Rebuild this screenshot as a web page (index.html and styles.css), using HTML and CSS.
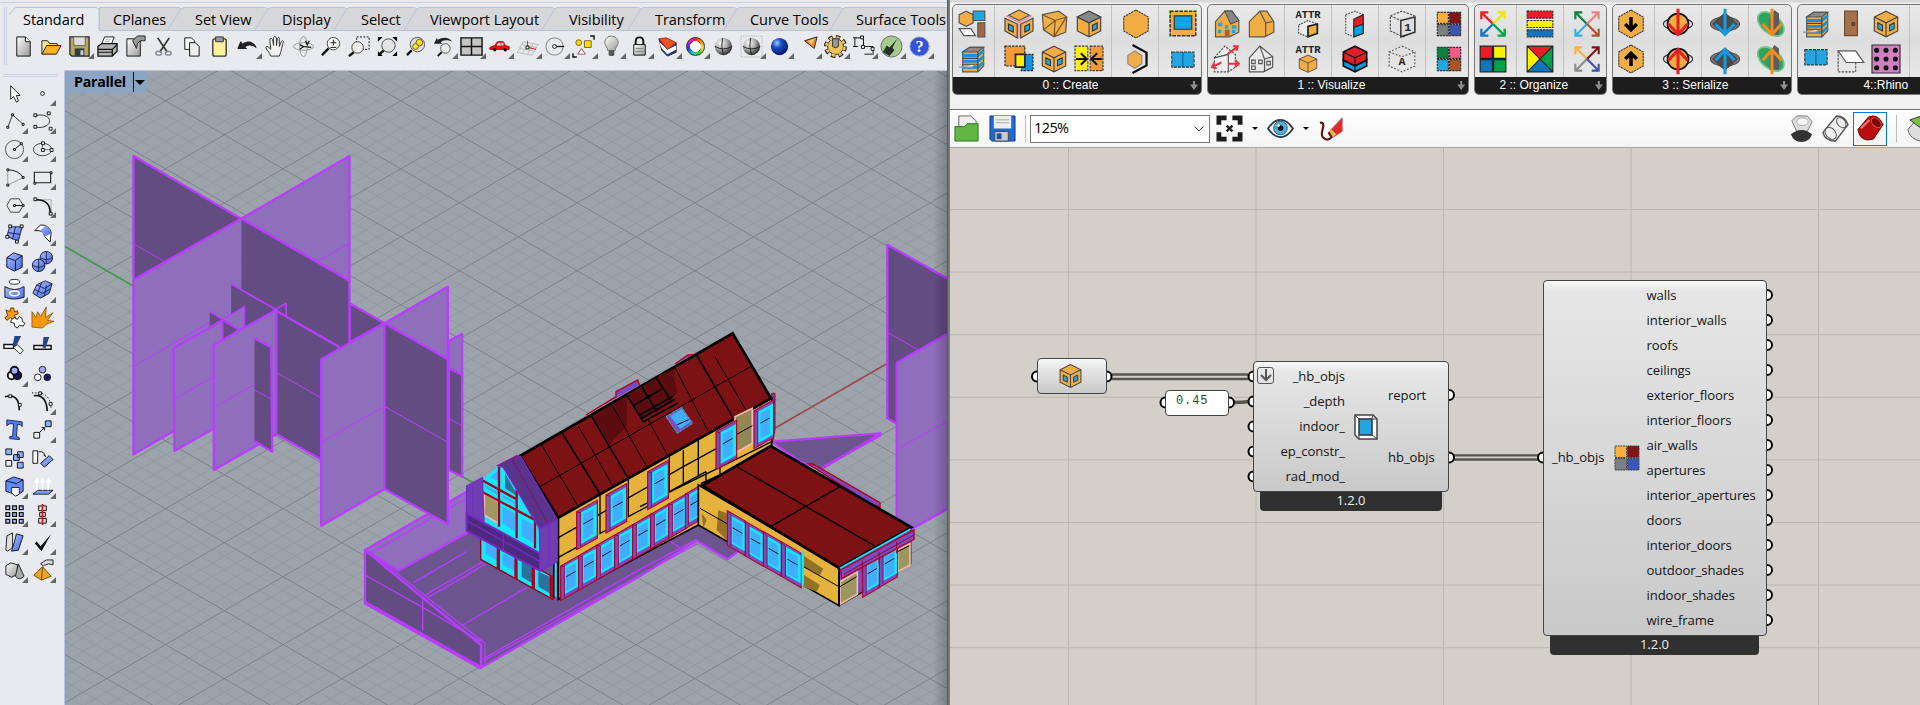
FILE: index.html
```html
<!DOCTYPE html>
<html lang="en">
<head>
<meta charset="utf-8">
<title>Rhino and Grasshopper</title>
<link rel="stylesheet" href="styles.css">
</head>
<body>
<svg class="defs" width="0" height="0">
<defs>
<linearGradient id="gold" x1="0" y1="0" x2="0" y2="1"><stop offset="0" stop-color="#fff3a8"/><stop offset="1" stop-color="#f0b020"/></linearGradient>
<linearGradient id="blu" x1="0" y1="0" x2="1" y2="1"><stop offset="0" stop-color="#a9bfff"/><stop offset="1" stop-color="#4468dd"/></linearGradient>
<linearGradient id="gry" x1="0" y1="0" x2="1" y2="1"><stop offset="0" stop-color="#fff"/><stop offset="1" stop-color="#999"/></linearGradient>
<radialGradient id="ball" cx=".35" cy=".3" r=".75"><stop offset="0" stop-color="#fff"/><stop offset=".5" stop-color="#aaa"/><stop offset="1" stop-color="#222"/></radialGradient>
<radialGradient id="bball" cx=".35" cy=".3" r=".75"><stop offset="0" stop-color="#9fd0ff"/><stop offset=".35" stop-color="#1c50c8"/><stop offset="1" stop-color="#001060"/></radialGradient>
<g id="cube"><path d="M12 1l10 5v12l-10 5-10-5V6z" fill="#f3ad45" stroke="#444"/><path d="M2 6l10 5 10-5M12 11v12" fill="none" stroke="#444"/></g>
<g id="cubewin"><use href="#cube"/><path d="M5 11l4 2v5l-4-2zM19 11l-4 2v5l4-2z" fill="#25a5e0" stroke="#333" stroke-width=".9"/></g>
<g id="hex"><path d="M12 0l10.500 6v12L12 24 1.500 18V6z" fill="#f3ad45" stroke="#444" stroke-dasharray="2 .6"/></g>
<g id="building"><path d="M4 6l6-4h12v16l-5 5H4z" fill="#f3ad45" stroke="#555"/><path d="M4 6h13l5-4H10z" fill="#8a8a8a" stroke="#555"/><path d="M4 9h13l5-4M4 14h13l5-4M4 19h13l5-4" fill="none" stroke="#1991d2" stroke-width="2.500"/><path d="M4 11.500h13M4 16.500h13M17 6v17" stroke="#444" fill="none"/><path d="M1 19h11l3-2" fill="#fff" stroke="#888"/></g>
<g id="eyes"><ellipse cx="12" cy="12" rx="12.500" ry="6" fill="#777" stroke="#555"/><path d="M1 12L12 2l11 10-11 10z" fill="#4d4d4d"/><circle cx="12" cy="12" r="8"/></g>
<g id="dn"><path d="M12-1v22M4 12l8 9 8-9" fill="none" stroke-width="2.600"/></g>
<g id="up"><path d="M12 25V4M4 13l8-9 8 9" fill="none" stroke-width="2.600"/></g>
<g id="leaf"><ellipse cx="11" cy="12" rx="13" ry="8" transform="rotate(40 11 12)" fill="#2fa45c" stroke="#72c690" stroke-width="1.500"/><path d="M10 21V7l4-7 4 3v18z" fill="#5c5c5c"/></g>
<g id="bluewin"><path d="M1 6h22v13H1z" fill="#25a5e0" stroke="#333" stroke-dasharray="3 1"/><path d="M12 6v13" stroke="#135c86"/></g>
<g id="win"><path d="M0 0h62v114H0z" fill="#7b4abf" stroke="#b00020" stroke-width="3.500"/><path d="M13 10h47v94H13z" fill="#13e8ff"/><path d="M20 19h30v76H20z" fill="#40adff"/><path d="M20 48h30" stroke="#000" stroke-width="2.500"/><path d="M0 0l12 10v104" fill="none" stroke="#a00030" stroke-width="2.500"/></g>
<g id="lowin"><path d="M0 0h54v104H0z" fill="#7b4abf" stroke="#b00020" stroke-width="3.500"/><path d="M12 8h41v84H12z" fill="#13e8ff"/><path d="M16 17h29v68H16z" fill="#40adff"/><path d="M16 42h29" stroke="#000" stroke-width="2.500"/><path d="M0 0l11 8v92" fill="none" stroke="#a00030" stroke-width="2.500"/></g>
</defs>
</svg>

<main class="screen">
<section class="rhino">
  <header class="tabs">
    <svg class="tabshape" width="948" height="36" viewBox="0 0 948 36">
      <path d="M0 2.500h948M4.500 7v58M6.500 7v58" stroke="#c9d0e6" fill="none"/>
      <g fill="#d7d7d9" stroke="#b8c3dd"><path d="M99.500 30.500V7.500H178q3 0 3 3v20z"/>
      <path d="M167.500 30.500l13-21q1.500-2 4-2H265q3 0 3 3v20z"/><path d="M254.500 30.500l13-21q1.500-2 4-2H344q3 0 3 3v20z"/>
      <path d="M333.500 30.500l13-21q1.500-2 4-2H414q3 0 3 3v20z"/><path d="M403.500 30.500l13-21q1.500-2 4-2H552q3 0 3 3v20z"/>
      <path d="M541.500 30.500l13-21q1.500-2 4-2H638q3 0 3 3v20z"/><path d="M627.500 30.500l13-21q1.500-2 4-2H734q3 0 3 3v20z"/>
      <path d="M723.500 30.500l13-21q1.500-2 4-2H840q3 0 3 3v20z"/><path d="M829.500 30.500l13-21q1.500-2 4-2H952v23z"/></g>
      <path d="M9 15l5-6q1-1.500 3-1.500h79q3 0 3 3v20" fill="none" stroke="#b8c3dd"/>
    </svg>
    <span style="width:90px">Standard</span><span style="width:82px">CPlanes</span><span style="width:87px">Set View</span><span style="width:79px">Display</span><span style="width:69px">Select</span><span style="width:139px">Viewport Layout</span><span style="width:86px">Visibility</span><span style="width:95px">Transform</span><span style="width:106px">Curve Tools</span><span style="width:92px">Surface Tools</span>
  </header>
  <div class="toolbar">
    <i><svg viewBox="0 0 24 24"><path d="M5 2h9l5 5v15H5z" fill="url(#gry)" stroke="#111"/><path d="M14 2v5h5" fill="#fff" stroke="#111"/></svg></i>
    <i><svg viewBox="0 0 24 24"><path d="M2 20V6h6l2 3h8v3" fill="#ffe98c" stroke="#222"/><path d="M2 20l5-9h15l-5 9z" fill="#f7b320" stroke="#222"/></svg></i>
    <i class="m"><svg viewBox="0 0 24 24"><path d="M2 2h20v20H4l-2-2z" fill="#b3a85c" stroke="#222" stroke-width="1.300"/><path d="M6 2h12v9H6z" fill="#ddd" stroke="#666"/><path d="M7 14h10v8H7z" fill="#303a48"/><path d="M13 16h3v5h-3z" fill="#c8cbd8"/></svg></i>
    <i><svg viewBox="0 0 24 24"><path d="M6 9l3-7h10l-3 8z" fill="#fff" stroke="#222"/><path d="M2 12l4-3h16v8l-5 5H2z" fill="#b4b4b4" stroke="#111" stroke-width="1.300"/><path d="M2 15h15l5-5M2 18h15M17 15v7" stroke="#111" fill="none" stroke-width="1.300"/><path d="M10 5h5M9 7h5" stroke="#aaa"/></svg></i>
    <i><svg viewBox="0 0 24 24"><path d="M3 4h14v18H3z" fill="url(#gry)" stroke="#111"/><path d="M9 6l5-5h8v5h-5l-3 3-1 5z" fill="#999" stroke="#222"/></svg></i>
    <i><svg viewBox="0 0 24 24"><path d="M6 3l10 15M18 3L8 18" stroke="#333" stroke-width="1.800"/><ellipse cx="7" cy="19" rx="3" ry="2" fill="none" stroke="#889" stroke-width="1.500"/><ellipse cx="17" cy="19" rx="3" ry="2" fill="none" stroke="#889" stroke-width="1.500"/></svg></i>
    <i><svg viewBox="0 0 24 24"><path d="M5 3h7l3 3v9H5z" fill="#fff" stroke="#111"/><path d="M10 8h6l4 4v10H10z" fill="#eee" stroke="#111"/></svg></i>
    <i><svg viewBox="0 0 24 24"><rect x="5" y="4" width="14" height="18" rx="2" fill="#fff09b" stroke="#333" stroke-width="1.400"/><path d="M8 2h8v5H8z" fill="#999" stroke="#333"/></svg></i>
    <i class="m"><svg viewBox="0 0 24 24"><path d="M2 14l3-7 1 3c5-4 12-4 15 3-5-4-10-3-12 0l2 1z" fill="#222" stroke="#111"/></svg></i>
    <i><svg viewBox="0 0 24 24"><path d="M7 22c-1-4-5-7-5-9s3-1 5 2L6 5c0-2 2-2 3 0l1 6V3c0-2 2-2 3 0v8l1-7c0-2 3-2 2 1v7l2-5c1-2 3-1 2 1-2 7-2 9-4 14z" fill="#f2f2f2" stroke="#333"/></svg></i>
    <i><svg viewBox="0 0 24 24"><ellipse cx="12" cy="12" rx="10.500" ry="4" fill="none" stroke="#999"/><ellipse cx="12" cy="12" rx="4" ry="10.500" fill="none" stroke="#999"/><path d="M8 10l4 2-4 3M14 6l2 4 2-4M12 12l8 1" stroke="#111" fill="none" stroke-width="1.300"/></svg></i>
    <i><svg viewBox="0 0 24 24"><circle cx="14" cy="9" r="6.500" fill="#f4f4f4" stroke="#444"/><path d="M9 14l-7 7" stroke="#111" stroke-width="2.500"/><path d="M14 5v6M11 8h6M11 13h6" stroke="#222"/></svg></i>
    <i><svg viewBox="0 0 24 24"><path d="M9 2h13v13H9z" fill="none" stroke="#111" stroke-dasharray="2 1.500"/><circle cx="10" cy="13" r="6" fill="#eee" stroke="#444"/><path d="M6 18l-5 4" stroke="#111" stroke-width="2.500"/></svg></i>
    <i><svg viewBox="0 0 24 24"><circle cx="13" cy="11" r="7" fill="#e4e4e4" stroke="#444"/><path d="M8 16l-4 4" stroke="#111" stroke-width="2.500"/><path d="M2 2h5L2 7zM22 2v5l-5-5zM22 22h-5l5-5zM2 22v-5l5 5z"/></svg></i>
    <i><svg viewBox="0 0 24 24"><circle cx="14" cy="10" r="7.500" fill="#ddd" stroke="#555"/><path d="M8 16l-5 5" stroke="#111" stroke-width="2.500"/><circle cx="16" cy="8" r="3.500" fill="#ffe42e" stroke="#775500"/><circle cx="12" cy="12" r="3" fill="#ffe42e" stroke="#775500"/></svg></i>
    <i class="m"><svg viewBox="0 0 24 24"><path d="M2 9l3-6 1 2c5-3 12-3 15 2-5-2-10-2-12 1l2 1z" fill="#222"/><circle cx="14" cy="14" r="5" fill="#eee" stroke="#555"/><path d="M10 18l-4 4" stroke="#111" stroke-width="2"/></svg></i>
    <i class="m"><svg viewBox="0 0 24 24"><path d="M1 3h22v18H1z" fill="#c4c4c4" stroke="#111" stroke-width="1.500"/><path d="M12 3v18M1 12h22" stroke="#111" stroke-width="1.500"/></svg></i>
    <i class="m"><svg viewBox="0 0 24 24"><path d="M2 13l5-2 3-4h6l2 4 4 1v3H2z" fill="#e11313" stroke="#b00"/><path d="M11 8h2v3H9zM14 8h2v3h-2z" fill="#fff"/><circle cx="7" cy="15.500" r="1.700"/><circle cx="18" cy="15.500" r="1.700"/></svg></i>
    <i class="m"><svg viewBox="0 0 24 24"><path d="M1 18L8 7l15 3-6 11zM4 14l15 3M6 10l15 3M13 8L7 19M18 9l-6 11" fill="none" stroke="#bbb"/><path d="M12 12V6" stroke="#1a9a30"/><path d="M13 13l8 2" stroke="#d01010"/><path d="M10.500 11.500h3v3h-3z" fill="#fff" stroke="#111"/></svg></i>
    <i class="m"><svg viewBox="0 0 24 24"><circle cx="11" cy="12" r="9" fill="none" stroke="#999" stroke-width="1.300"/><path d="M11 12h10" stroke="#111" stroke-width="1.300"/><circle cx="11" cy="12" r="2" fill="#fff" stroke="#111"/></svg></i>
    <i class="m"><svg viewBox="0 0 24 24"><path d="M19 1h4v4M1 19v4h4" fill="none" stroke="#111" stroke-width="1.500"/><circle cx="7" cy="8" r="3" fill="#ffdc18" stroke="#885f00"/><path d="M13 6h7v7h-7z" fill="#ffe018" stroke="#885f00"/><path d="M10 14l4 6H6z" fill="#fff" stroke="#955"/></svg></i>
    <i class="m"><svg viewBox="0 0 24 24"><path d="M8 16c0-4-3-5-3-8 0-9 14-9 14 0 0 3-3 4-3 8z" fill="url(#gry)" stroke="#777"/><path d="M9 16h6v5l-2 1h-2l-2-1z" fill="#555"/></svg></i>
    <i class="m"><svg viewBox="0 0 24 24"><path d="M8 11V7c0-6 8-6 8 0v4" fill="none" stroke="#111" stroke-width="2"/><path d="M6 10h12v11H6z" fill="url(#gry)" stroke="#111"/><path d="M8 14h8M8 17h8" stroke="#777"/></svg></i>
    <i class="m"><svg viewBox="0 0 24 24"><path d="M3 4l9 8 9-4v10l-9 4-6-6z" fill="#1c3aa0" stroke="#222"/><path d="M3 7l9 8 9-4v4l-9 5-6-6z" fill="#fff"/><path d="M3 4l8-1 10 5-9 7z" fill="#f0531c" stroke="#a21"/></svg></i>
    <i class="m"><b class="wheel"></b></i>
    <i><svg viewBox="0 0 24 24"><circle cx="12" cy="12" r="9" fill="url(#ball)"/><path d="M3 12q9 5 18 0M11 3q-2 9 1 18" fill="none" stroke="#222"/></svg></i>
    <i class="m"><svg viewBox="0 0 24 24"><path d="M1 1h22v22H1z" fill="none" stroke="#ccc" stroke-width="2" stroke-dasharray="1 1"/><circle cx="12" cy="12" r="9" fill="url(#ball)"/><path d="M3 12q9 5 18 0M11 3q-2 9 1 18" fill="none" stroke="#222"/></svg></i>
    <i class="m"><svg viewBox="0 0 24 24"><circle cx="12" cy="12" r="9" fill="url(#bball)"/></svg></i>
    <i class="m"><svg viewBox="0 0 24 24"><path d="M9 6l13-4-3 12z" fill="#f7921e" stroke="#222"/><path d="M13 6l6-2-3 6z" fill="#ffd18a"/></svg></i>
    <i class="m"><svg viewBox="0 0 24 24"><circle cx="12" cy="12" r="9.500" fill="none" stroke="#222" stroke-width="5" stroke-dasharray="4.400 3.060"/><circle cx="12" cy="12" r="8.300" fill="#efc35c" stroke="#222"/><circle cx="12" cy="12" r="9.300" fill="none" stroke="#efc35c" stroke-width="3" stroke-dasharray="3 4.300" stroke-dashoffset="-.7"/><path d="M9 4h6v8q-3 3-6 0z" fill="#999" stroke="#333"/></svg></i>
    <i class="m"><svg viewBox="0 0 24 24"><path d="M4 3h6M1 3h4M1 12h5M3 3v9M12 4v8h10v9M13 20h8" stroke="#111" fill="none"/><path d="M9 1h3v3H9zM10 11h3v3h-3zM20 13h3v3h-3z" fill="#fff" stroke="#111"/></svg></i>
    <i class="m"><svg viewBox="0 0 24 24"><circle cx="12" cy="12" r="11" fill="#a8cc8d" stroke="#667"/><path d="M3 18l4-7 3 2 8-9-5 9 2 3-5 6z" fill="#263222"/></svg></i>
    <i class="m"><svg viewBox="0 0 24 24"><circle cx="12" cy="12" r="10" fill="#3554d5" stroke="#8a9be8"/><text x="12" y="18" text-anchor="middle" class="q">?</text></svg></i>
  </div>
  <div class="work">
    <aside class="side">
      <i><svg viewBox="0 0 24 24"><path d="M8 4v14l3-3 3 6 2-1-2-6h4z" fill="#fff" stroke="#222"/></svg></i>
      <i class="m"><svg viewBox="0 0 24 24"><circle cx="12" cy="12" r="2" fill="#fff" stroke="#222"/></svg></i>
      <i class="m"><svg viewBox="0 0 24 24"><path d="M5 18l5-13 11 10" fill="none" stroke="#333"/><path d="M4 17h2v2H4zM9 4h2v2H9zM20 14h2v2h-2z" fill="#fff" stroke="#111"/></svg></i>
      <i class="m"><svg viewBox="0 0 24 24"><path d="M4 6c20-5 21 15 0 12" fill="none" stroke="#333"/><path d="M3 4h3v3H3zM17 2h3v3h-3zM3 16h3v3H3zM19 18h3v3h-3z" fill="#fff" stroke="#111"/></svg></i>
      <i class="m"><svg viewBox="0 0 24 24"><circle cx="12" cy="12" r="9.500" fill="none" stroke="#555"/><path d="M12 12l7-6" stroke="#111"/><path d="M11 11h2v2h-2zM18 5h2v2h-2z" fill="#fff" stroke="#111"/></svg></i>
      <i class="m"><svg viewBox="0 0 24 24"><ellipse cx="12" cy="12" rx="9.500" ry="6.500" fill="none" stroke="#444"/><path d="M12 12V6M12 12h9" stroke="#777"/><path d="M11 4h3v3h-3zM11 11h3v3h-3zM20 11h3v3h-3z" fill="#fff" stroke="#111"/></svg></i>
      <i class="m"><svg viewBox="0 0 24 24"><path d="M5 4q11 0 16 8" fill="none" stroke="#111"/><path d="M5 4v16l16-8" fill="none" stroke="#999"/><path d="M4 3h2v2H4zM4 19h2v2H4zM20 11h2v2h-2z" fill="#fff" stroke="#111"/></svg></i>
      <i class="m"><svg viewBox="0 0 24 24"><path d="M3.500 6.500h17v11h-17z" fill="none" stroke="#222" stroke-width="1.200"/><path d="M20 6h2v2h-2zM3 17h2v2H3z" fill="#fff" stroke="#111"/></svg></i>
      <i class="m"><svg viewBox="0 0 24 24"><path d="M8 5h9l4 7-4 7H8l-4-7z" fill="none" stroke="#444"/><path d="M12 12h9" stroke="#111"/><path d="M11 11h2v2h-2zM20 11h2v2h-2z" fill="#fff" stroke="#111"/></svg></i>
      <i class="m"><svg viewBox="0 0 24 24"><path d="M4 6h17v14" fill="none" stroke="#aaa"/><path d="M4 6q16-1 16 14" fill="none" stroke="#111" stroke-width="1.700"/><path d="M3 4h3v3H3zM19 19h3v3h-3z" fill="#fff" stroke="#111"/></svg></i>
      <i class="m"><svg viewBox="0 0 24 24"><path d="M7 5h13l-4 15-12-5z" fill="url(#blu)" stroke="#225"/><path d="M5 11l13 2M13 5l-3 13" stroke="#225"/><path d="M6 3h3v3H6zM18 3h3v3h-3zM3 14h3v3H3zM13 19h3v3h-3z" fill="#fff" stroke="#111"/></svg></i>
      <i class="m"><svg viewBox="0 0 24 24"><path d="M4 9l6-6q9 0 11 8l-1 10-6-6q0-7-10-6z" fill="#fff" stroke="#111"/><path d="M9 9l6-5q6 3 6 8l-7 3q-1-5-5-6z" fill="url(#blu)"/></svg></i>
      <i class="m"><svg viewBox="0 0 24 24"><path d="M4 8l7-5 9 3v12l-8 4-8-4z" fill="url(#blu)" stroke="#113"/><path d="M4 8l9 3 7-5M13 11v10" fill="none" stroke="#113"/></svg></i>
      <i class="m"><svg viewBox="0 0 24 24"><circle cx="16" cy="8" r="6.500" fill="url(#blu)" stroke="#113"/><circle cx="8" cy="16" r="6.500" fill="url(#blu)" stroke="#113"/><path d="M10 8q6 4 12 0M16 2v12M2 16q6 4 12 0M8 10v12" stroke="#225" fill="none"/></svg></i>
      <i class="m"><svg viewBox="0 0 24 24"><ellipse cx="12" cy="4" rx="5.500" ry="2.500" fill="#fff" stroke="#222"/><path d="M2 9q10 6 20 0v11q-10 4-20 0z" fill="url(#blu)" stroke="#113"/><ellipse cx="12" cy="16" rx="5" ry="2.500" fill="none" stroke="#fff" stroke-width="1.500"/></svg></i>
      <i class="m"><svg viewBox="0 0 24 24"><path d="M2 16l4-9 9-4 7 3-3 10-9 5z" fill="url(#blu)" stroke="#225"/><path d="M4 12l8 4 9-5M6 7l8 4 8-5M11 5l-5 13M16 8l-2 11" stroke="#225" fill="none"/></svg></i>
      <i><svg viewBox="0 0 24 24"><path d="M3 4l4 2 1-4h3l1 4 3-1 1 3-4 2 2 4-3 1-3-3-4 3-2-3 3-2z" fill="#f69a12" stroke="#6b3a00"/><path d="M12 12l3 2 2-3 3 2v3l3 2-2 3-4-1-2 3-3-2v-3l-4-1 1-3z" fill="#fff" stroke="#222"/></svg></i>
      <i><svg viewBox="0 0 24 24"><path d="M1 22V6l4 6 2-6 3 5 6-10-1 11 8-5-6 8 7 1-8 3-4 4z" fill="#f5980c" stroke="#8a4c00" stroke-width=".8"/></svg></i>
      <i><svg viewBox="0 0 24 24"><path d="M1 11h10v4H1z" fill="#fff" stroke="#111" stroke-width="1.500"/><path d="M12 2h7l-6 12-3-2z" fill="#24458f"/><path d="M11 14l4-3 6 6-3 4z" fill="#fff" stroke="#222"/></svg></i>
      <i><svg viewBox="0 0 24 24"><path d="M3 12h18v4H3z" fill="#fff" stroke="#111" stroke-width="1.500"/><path d="M13 3h6l-4 12-3-1z" fill="#24458f"/></svg></i>
      <i class="m"><svg viewBox="0 0 24 24"><g stroke="#111" stroke-width="2"><circle cx="9" cy="14" r="4" fill="#fff"/><circle cx="15" cy="14" r="4" fill="#171766"/><circle cx="12" cy="9" r="4" fill="#a7a9ff"/></g></svg></i>
      <i><svg viewBox="0 0 24 24"><g stroke="#222"><circle cx="7" cy="16" r="3.500" fill="#fff"/><circle cx="17" cy="16" r="3.500" fill="#171766"/><circle cx="12" cy="8" r="3.500" fill="#a7a9ff"/></g></svg></i>
      <i><svg viewBox="0 0 24 24"><path d="M2 7q15-4 15 14" fill="none" stroke="#111" stroke-width="1.700"/><path d="M6 5h3v3H6zM16 14h3v3h-3z" fill="#fff" stroke="#111"/></svg></i>
      <i class="m"><svg viewBox="0 0 24 24"><path d="M3 6q13-2 14 16" fill="none" stroke="#111" stroke-width="1.700"/><path d="M1 3h8q12 2 12 18" fill="none" stroke="#111" stroke-dasharray="1.500 2"/><path d="M8 2h3v3H8zM19 13h3v3h-3z" fill="#fff" stroke="#111"/></svg></i>
      <i><svg viewBox="0 0 24 24"><path d="M4 2l16 2v5l-2-2-3-.5-1 13 3 1v2l-10-1v-2l3-.5 1-13L7 6 4 8z" fill="#547bec" stroke="#172a66"/></svg></i>
      <i class="m"><svg viewBox="0 0 24 24"><path d="M3 15h6v6H3z" fill="#eee" stroke="#111"/><path d="M15 3h6v6h-6z" fill="#8fb0ff" stroke="#111"/><path d="M9 15l5-5M11 10h3v3" stroke="#111" fill="none"/></svg></i>
      <i><svg viewBox="0 0 24 24"><g fill="#8fb0ff" stroke="#111"><path d="M3 2h6v6H3zM15 5h6v6h-6zM11 8h6v6h-6zM15 16h6v6h-6z"/><path d="M3 14h6v6H3z" fill="#eee"/></g></svg></i>
      <i><svg viewBox="0 0 24 24"><path d="M2 4h5v13H2z" fill="#fff" stroke="#111"/><path d="M8 5q6-1 7 5l-2-2" stroke="#111" fill="none"/><path d="M10 17l9-8 4 4-9 8z" fill="#7a9dff" stroke="#111"/></svg></i>
      <i class="m"><svg viewBox="0 0 24 24"><path d="M3 6l8-4 10 3v12l-6 4-12-4z" fill="#648cf4" stroke="#113"/><path d="M3 6l11 3 7-4" fill="none" stroke="#113"/><path d="M9 13h8v7l-4 2-4-3z" fill="#fff" stroke="#222"/></svg></i>
      <i class="m"><svg viewBox="0 0 24 24"><path d="M2 20l5-4h16l-5 4z" fill="#7d9cff" stroke="#222"/><path d="M6 16V5M12 16V5M18 16V5M4 8l2-4 2 4M10 8l2-4 2 4M16 8l2-4 2 4" stroke="#fff" stroke-width="1.700" fill="none"/></svg></i>
      <i class="m"><svg viewBox="0 0 24 24"><g fill="#a8c0ff" stroke="#111" stroke-width="1.300"><path d="M3 3h4v4H3zM10 3h4v4h-4zM17 3h4v4h-4zM3 10h4v4H3zM10 10h4v4h-4zM17 10h4v4h-4zM3 17h4v4H3zM10 17h4v4h-4zM17 17h4v4h-4z"/></g></svg></i>
      <i class="m"><svg viewBox="0 0 24 24"><path d="M8 3h8v5H8zM9 10h6v4H9zM8 16h8v5H8z" fill="#ddd" stroke="#111"/><path d="M12 1v22" stroke="#e01010" stroke-width="1.700"/></svg></i>
      <i class="m"><svg viewBox="0 0 24 24"><path d="M4 5l6-3v15l-5 4-2-1z" fill="#ddd" stroke="#222"/><path d="M14 3l7 2-5 15-7 1 3-10z" fill="url(#blu)" stroke="#113"/></svg></i>
      <i class="m"><svg viewBox="0 0 24 24"><path d="M4 13l2-2 4 5L21 3 11 21z" fill="#111"/></svg></i>
      <i class="m"><svg viewBox="0 0 24 24"><path d="M3 7l5-3 7 2v10l-6 3-6-3z" fill="url(#gry)" stroke="#222"/><path d="M16 5l6 13q-5 5-9 0z" fill="#aaa" stroke="#222"/></svg></i>
      <i class="m"><svg viewBox="0 0 24 24"><path d="M12 8l9 10-10 4-8-5z" fill="#f0a428" stroke="#6d4800"/><path d="M12 8l-1 14" stroke="#6d4800"/><path d="M10 5l6-4h7v5l-5-1-5 2z" fill="#ddd" stroke="#222"/></svg></i>
    </aside>
    <div class="viewport">
      <svg width="883" height="634" viewBox="65 71 883 634">
        <path id="minor" stroke="#929aa1" stroke-width=".9" fill="none"/>
        <path id="major" stroke="#7f8189" fill="none"/>
        <path d="M65 246.500L480 486.700" stroke="#45994c" stroke-width="1.700"/>
        <path d="M770 431L888 363" stroke="#9d4b50" stroke-width="1.700"/>
        <g transform="translate(350 320) scale(.33333)" stroke-linejoin="round" stroke="#b83dff" stroke-width="7">
          <path d="M65 700L350 535H900L1045 600 1170 690 1132 718 1040 662 870 768 398 1040z" fill="#6c548f"/>
          <path d="M45 690L350 515V640L145 752z" fill="#8f6fbc"/>
          <path d="M60 700L350 535M190 788L350 695M235 832L410 730M220 828L400 724M338 915L530 803M385 1025L870 748 1040 658M405 1020L1040 672M955 660l35 22" fill="none" stroke-width="4"/>
          <path d="M45 690L220 835 393 975V1045L45 850z" fill="#634c82"/>
          <path d="M65 700L405 970V1035M45 765l173 97 175 103M218 838v92" fill="none" stroke-width="4"/>
          <path d="M45 848l347 195" stroke-width="11"/>
        </g>
        <g transform="translate(640 320) scale(.33333)" stroke="#b83dff" stroke-width="7" stroke-linejoin="round">
          <path d="M395 365L722 340 545 447 480 425z" fill="#6c548f"/><path d="M550 440l174-95" fill="none"/>
          <path d="M742-226L960-103V310H768L742 295z" fill="#634c82"/>
          <path d="M742 37l93 53" stroke-width="3"/>
          <path d="M770 128L960 20V546L815 627 770 640z" fill="#8f6fbc"/><path d="M770 388l190-105" stroke-width="3"/>
        </g>
        <g transform="translate(119.500 140) scale(.33333)" stroke="#b83dff" stroke-width="7" stroke-linejoin="round">
          <path d="M690 490l105 60-105 57z" fill="#634c82"/>
          <path d="M42 48L365 236 42 420z" fill="#634c82"/>
          <path d="M365 236L690 48V422z" fill="#8f6fbc"/>
          <path d="M365 236L690 422V760H365z" fill="#634c82" stroke="none"/><path d="M365 236L690 422V610" fill="none"/>
          <path d="M42 420L365 236V757L42 943z" fill="#8f6fbc" stroke="none"/><path d="M365 236L42 420V943L365 757" fill="none"/>
          <path d="M42 312l95 53M590 366l100-56M42 680l233-136" stroke-width="3" fill="none"/>
          <path d="M335 432l133 76-133 82z" fill="#634c82" stroke="none"/><path d="M335 432l133 76 32-18v38" fill="none" stroke-width="5"/>
          <path d="M470 512L658 620V650L603 958 470 882z" fill="#634c82"/>
          <path d="M270 515l40 25-40 20z" fill="#634c82" stroke-width="3"/>
          <path d="M310 538L375 500V580H310z" fill="#8f6fbc" stroke="none"/><path d="M270 515l40 23 65-38v60" fill="none" stroke-width="4"/>
          <path d="M162 625L310 540V850L165 933z" fill="#8f6fbc"/>
          <path d="M312 540l45 28-45 28z" fill="#634c82" stroke="none"/><path d="M310 540l47 28" />
          <path d="M282 615L470 510V883L283 990z" fill="#8f6fbc"/>
          <path d="M405 595l50 27 3 313-53-32z" fill="#634c82" stroke="none"/><path d="M405 595l50 27 3 313-53-32" fill="none"/>
          <path d="M165 776l115-65M283 802l122-68M405 750l50 27M470 697l133 75" stroke-width="3" fill="none"/>
          <path d="M795 550L985 440V658z" fill="#8f6fbc"/>
          <path d="M988 603l40-21V705l-40-20z" fill="#8f6fbc"/>
          <path d="M988 685l40 20v305l-40-20z" fill="#634c82"/><path d="M988 836l40 21" stroke-width="3"/>
          <path d="M605 658L795 550V1047L605 1157z" fill="#8f6fbc"/>
          <path d="M795 550L985 658V1153L795 1047z" fill="#634c82"/>
          <path d="M605 907l190-108 190 108" fill="none" stroke-width="3"/>
        </g>
        <g transform="translate(350 320) scale(.33333)">
          <path d="M708 285l90-55v-15l65-35 6 15M975 132l40-28h15" fill="#7b4abf" stroke="#b00020" stroke-width="4"/>
          <path d="M1265 220h10v110l-8 40z" fill="#6a3fae" stroke="#b00020" stroke-width="3"/>
          <path d="M625 593L1265 235V395L1055 490V610L625 838z" fill="#e5b23c" stroke="#000" stroke-width="5"/>
          <path d="M510 408L1148 40 1263 235 625 593z" fill="#7d1214" stroke="#000" stroke-width="8"/>
          <path d="M725 290l105-62v90l-50 55zM830 225l95-55 45 75-95 55zM922 170l50-25 8 75-20 15z" fill="#5b0c0f"/>
          <path d="M570 500L1205 138M575 375L685 560M685 318L790 500M785 253L890 440M975 143L1075 335M1095 110L1205 300M895 300L955 410" stroke="#000" stroke-width="3" fill="none"/>
          <path d="M637 340L752 525M725 290L835 475M830 225L880 305 985 248M920 175L962 240M1040 105L1148 292M870 285L970 228M875 295L975 238M850 257L935 207M873 195L920 275" stroke="#000" stroke-width="5" fill="none"/>
          <path d="M948 290L995 262 1028 310 982 340z" fill="#7b4abf" stroke="#1ce5e5" stroke-width="3" stroke-dasharray="3 2"/><path d="M960 288l35-21 28 38-33 22z" fill="#40adff"/><path d="M982 314l34-15" stroke="#000" stroke-width="3"/>
          <path d="M625 653L1000 440M835 478V590L900 555M958 410V515L1068 455M1000 390V490M1045 358V470M870 560L1265 365M1000 440l100-55M750 525V640L770 630M625 712L680 682M1068 455v35l165-85M1110 432v32" stroke="#000" stroke-width="4" fill="none"/>
          <path d="M1155 290l52-25v105l-52 30z" fill="#918854" stroke="#f9b8b0" stroke-width="5"/><path d="M1157 345l50-28" stroke="#000" stroke-width="3"/>
          <g><use href="#win" transform="translate(680 575) skewY(-29)"/><use href="#win" transform="translate(768 525) skewY(-29)"/><use href="#win" transform="translate(893 455) skewY(-29)"/><use href="#win" transform="translate(1098 335) skewY(-29)"/><use href="#win" transform="translate(1212 272) skewY(-29) scale(.95 1)"/></g>
          <g><use href="#lowin" transform="translate(632 738) skewY(-30)"/><use href="#lowin" transform="translate(686 707) skewY(-30)"/><use href="#lowin" transform="translate(740 676) skewY(-30)"/><use href="#lowin" transform="translate(794 645) skewY(-30)"/><use href="#lowin" transform="translate(848 614) skewY(-30)"/><use href="#lowin" transform="translate(902 583) skewY(-30)"/><use href="#lowin" transform="translate(956 552) skewY(-30)"/><use href="#lowin" transform="translate(1006 522) skewY(-30) scale(.9 1)"/></g>
          <path d="M392 652L608 770V838L392 718z" fill="#13e8ff" stroke="#900018" stroke-width="4"/>
          <path d="M407 670l33 16v35l-33-19zM458 698l36 20v35l-36-20z" fill="#40adff"/><path d="M515 725l32 17v48l-32-20zM565 755l35 15v50l-35-20z" fill="#2b719d"/>
          <path d="M445 675v72M498 705v72M550 735v72M604 765v72" stroke="#b00020" stroke-width="10"/><path d="M612 725v110M625 590v245" stroke="#000" stroke-width="5"/><path d="M617 720v112" stroke="#13e8ff" stroke-width="6"/>
          <path d="M397 480L445 437 500 408 612 610 570 700 400 610z" fill="#13e8ff"/>
          <path d="M403 520l42 25v65l-42-25z" fill="#a09660" stroke="#f9b8b0" stroke-width="5"/>
          <path d="M458 560l38 22v53l-38-25zM515 595l35 20v55l-35-22zM405 495l40 22v10l-40-25zM458 525l38 20v8l-38-20zM420 472l25-20v30z" fill="#40adff"/>
          <path d="M465 460l40 70-40-25z" fill="#2b719d"/>
          <path d="M395 480v35l160 85v85M395 480l105 58M447 440v180M500 510v145" stroke="#a00024" stroke-width="7" fill="none"/>
          <path d="M443 437l57-30 12 3L622 600l-54 25-108-183z" fill="#5a338d" stroke="#7928c7" stroke-width="4"/><path d="M488 420l105 190M443 437l60-30" stroke="#a00030" stroke-width="3" stroke-dasharray="5 4"/>
          <path d="M350 498l47-25 5 130-52-20z" fill="#6d3faf" stroke="#7928c7" stroke-width="4"/>
          <path d="M350 580L570 700V752L350 633z" fill="#4b2a7d" stroke="#7928c7" stroke-width="6"/><path d="M350 602l220 122M460 645v50" stroke="#7928c7" stroke-width="4"/>
          <path d="M568 625l54-25v125l-52 27z" fill="#6d3faf" stroke="#7928c7" stroke-width="4"/><path d="M596 612v125M368 490v95" stroke="#7928c7" stroke-width="3"/>
        </g>
        <g transform="translate(640 320) scale(.33333)">
          <path d="M505 432l14 0 201 116v14l-30-12z" fill="#7b4abf" stroke="#b00020" stroke-width="4"/>
          <path d="M175 495L597 742V857L175 615z" fill="#e5b23c" stroke="#000" stroke-width="5"/>
          <path d="M597 742L812 622V732L770 757 597 857z" fill="#7b4abf" stroke="#000" stroke-width="4"/>
          <path d="M235 570l25 10v80l-30-30zM185 580l15 20-10 25zM492 708l58 38-10 20-48-25zM492 765l48 30-10 20-40-15z" fill="#907126"/>
          <path d="M180 565L597 800" stroke="#000" stroke-width="3"/>
          <path d="M187 497L392 378 814 622 597 744z" fill="#7d1214" stroke="#000" stroke-width="8"/>
          <path d="M287 438L708 680M388 622L600 500" stroke="#000" stroke-width="4" fill="none"/>
          <g><use href="#lowin" transform="translate(262 572) skewY(30)"/><use href="#lowin" transform="translate(316 604) skewY(30)"/><use href="#lowin" transform="translate(370 634) skewY(30)"/><use href="#lowin" transform="translate(424 665) skewY(30) scale(1.100 1)"/></g>
          <path d="M488 692v106" stroke="#13e8ff" stroke-width="7"/>
          <path d="M600 785l52-30v68l-52 30zM773 690l37-20v65l-37 20z" fill="#9e965f" stroke="#f9b8b0" stroke-width="5"/>
          <path d="M600 800l50-30M773 695l35-18" stroke="#000" stroke-width="3"/>
          <use href="#lowin" transform="translate(668 728) skewY(-30) scale(.95 1)"/><use href="#lowin" transform="translate(718 700) skewY(-30) scale(1 .98)"/>
          <path d="M602 750L822 630V658L605 775z" fill="#7b4abf" stroke="#b00020" stroke-width="4"/><path d="M600 745L812 627" stroke="#13e8ff" stroke-width="5"/><path d="M613 762L822 645M667 722v35M717 695v35M770 665v35" stroke="#a00030" stroke-width="3"/>
          <path d="M597 744v113" stroke="#000" stroke-width="6"/>
        </g>
      </svg>
      <div class="viewname"><b>Parallel</b><em></em></div>
    </div>
  </div>
</section>

<section class="gh">
  <div class="ribbon">
    <div class="group g250"><div class="cells">
      <div class="c"><svg viewBox="0 0 24 24"><path d="M7 1l6 3v7l-6 3-6-3V4z" fill="#f3ad45" stroke="#555"/><path d="M13 1h10v8H13z" fill="#25a5e0" stroke="#555"/><path d="M17 11h6v12h-6z" fill="#a4663a" stroke="#555"/><path d="M1 16h10l4 6H5z" fill="#fff" stroke="#555"/></svg><svg viewBox="0 0 24 24"><use href="#building"/></svg></div><s></s>
      <div class="c"><svg viewBox="0 0 24 24"><path d="M12 0l9 4.500-9 4.500-9-4.500z" fill="#f3ad45" stroke="#555"/><path d="M0 7l10.500 5v12L0 18zM24 7l-10.500 5v12L24 18z" fill="#f3ad45" stroke="#444"/><path d="M3 12l4 2v5l-4-2zM21 12l-4 2v5l4-2z" fill="#25a5e0" stroke="#333"/><path d="M1 5l11 6 11-6M12 11v13" stroke="#f27c86" fill="none"/></svg><svg viewBox="0 0 24 24"><path d="M0 1h17v17H0z" fill="#f09a38" stroke="#222" stroke-dasharray="2 1"/><path d="M14 8h10v14H14z" fill="#1592e0" stroke="#222" stroke-dasharray="2 1"/><path d="M9 8h8v11H9z" fill="#ffef00" stroke="#222" stroke-width="1.500"/></svg></div>
      <div class="c"><svg viewBox="0 0 24 24"><path d="M2 4l14-3 7 5-1 13-10 4L3 17z" fill="#f3ad45" stroke="#555"/><path d="M2 4l11 5 10-3M13 9l-1 14L22 7M13 9L3 17" fill="none" stroke="#6f5522"/></svg><svg viewBox="0 0 24 24"><use href="#cubewin"/></svg></div>
      <div class="c"><svg viewBox="0 0 24 24"><use href="#cube"/><path d="M12 1l10 5-10 5L2 6z" fill="#888" stroke="#444"/><path d="M15 13l4-2v5l-4 2z" fill="#25a5e0" stroke="#333"/></svg><svg viewBox="0 0 24 24"><path d="M0 1h11v21H0z" fill="#fff200" stroke="#333" stroke-dasharray="2 1"/><path d="M13 1h11v21H13z" fill="#f09a38" stroke="#333" stroke-dasharray="2 1"/><path d="M1 12h9M5 7l5 5-5 5M23 12h-9M19 7l-5 5 5 5" stroke="#111" fill="none" stroke-width="1.800"/></svg></div><s></s>
      <div class="c"><svg viewBox="0 0 24 24"><use href="#hex"/></svg><svg viewBox="0 0 24 24"><path d="M11 5l6 4v7l-6 4-6-4V9z" fill="#f3ad45" stroke="#888"/><path d="M9 0l12 6.500v11L9 24" fill="none" stroke="#111" stroke-width="2"/></svg></div><s></s>
      <div class="c"><svg viewBox="0 0 24 24"><path d="M1 1h22v21H1z" fill="#f3ad45" stroke="#333" stroke-dasharray="3 1" stroke-width="1.300"/><path d="M4.500 5h15v11.500h-15z" fill="#0ca3e8" stroke="#333"/></svg><svg viewBox="0 0 24 24"><use href="#bluewin" transform="translate(1.500 0) scale(.87 1)"/></svg></div>
    </div><div class="cap">0 :: Create<u></u></div></div>
    <div class="group g262"><div class="cells">
      <div class="c"><svg viewBox="0 0 24 24"><path d="M3 10l8-9h6l6 8v10l-8 4H3z" fill="#f3ad45" stroke="#555"/><path d="M11 1h6l6 8-7 3z" fill="#888" stroke="#555"/><path d="M5 11h4v3H5zM11 13h3v3h-3zM17 13h4v3h-4zM5 17h3v3H5zM17 17h3v3h-3z" fill="#25a5e0"/><path d="M11 17h4v6h-4z" fill="#a46338"/></svg><svg viewBox="0 0 24 24"><path d="M2 11l9-10 9 7v11l-6 4H2z" fill="#eee" stroke="#555" stroke-dasharray="2 1"/><path d="M2 11l12-3v15" fill="none" stroke="#555"/><path d="M0 19l8-4M13 8l8-6M14 16h9M18 1h4l-1 4M20 13l3 3-3 3M2 15l-2 4 4 1" stroke="#ee3340" stroke-width="1.700" fill="none"/></svg></div>
      <div class="c"><svg viewBox="0 0 24 24"><path d="M2 10l9-9h6l6 9v9l-8 4H2z" fill="#f3ad45" stroke="#555"/><path d="M11 1l5 10v12M16 11l6-1" fill="none" stroke="#555"/></svg><svg viewBox="0 0 24 24"><path d="M2 11l9-10 11 9v9l-8 4H2z" fill="#e9e9e9" stroke="#555"/><path d="M11 1l4 11v11M15 12l7-2M4 13h3v3H4zM10 13h3v3h-3zM4 18h3v3H4zM17 14h3v3h-3z" fill="none" stroke="#555"/></svg></div><s></s>
      <div class="c"><svg viewBox="0 0 24 24"><text x="12" y="6.500" text-anchor="middle" class="at">ATTR</text><path d="M4 13l8-4 8 3v8l-8 3-8-3z" fill="#eee" stroke="#444" stroke-dasharray="1.500 1"/><path d="M12 14l8-2v8l-8 3z" fill="#f3ad45" stroke="#222" stroke-width="1.500"/></svg><svg viewBox="0 0 24 24"><text x="12" y="6.500" text-anchor="middle" class="at">ATTR</text><use href="#cube" transform="translate(3 8) scale(.75 .67)" /></svg></div><s></s>
      <div class="c"><svg viewBox="0 0 24 24"><path d="M4 4l8-3 7 3v16l-8 3-7-3z" fill="#e6e6e6" stroke="#555" stroke-dasharray="1.500 1"/><path d="M11 8l8-4v9l-8 4z" fill="#ee1c25" stroke="#222"/><path d="M11 15l8-3v8l-8 3z" fill="#00a2e8" stroke="#222"/></svg><svg viewBox="0 0 24 24"><path d="M12 1l10 5v7l-10 5-10-5V6z" fill="#e21f28" stroke="#111" stroke-width="1.500"/><path d="M2 13l10 5 10-5v5l-10 5-10-5z" fill="#0a9be0" stroke="#111" stroke-width="1.500"/><path d="M2 6l10 5 10-5M12 11v12" stroke="#111" fill="none"/></svg></div><s></s>
      <div class="c"><svg viewBox="0 0 24 24"><path d="M2 5l10-4 11 4v13l-10 5-11-5zM2 5l9 4" fill="none" stroke="#555" stroke-dasharray="2 1"/><path d="M11 9l12-3v13l-12 4z" fill="#ddd" stroke="#333" stroke-width="1.300"/><text x="17" y="18" text-anchor="middle" class="at l">1</text></svg><svg viewBox="0 0 24 24"><path d="M12 1l11 5v12l-11 5-11-5V6zM1 6l11 4 11-4" fill="none" stroke="#555" stroke-dasharray="1.500 1.500"/><text x="12" y="17" text-anchor="middle" class="at l">A</text></svg></div><s></s>
      <div class="c"><svg viewBox="0 0 24 24"><g stroke="#333" stroke-dasharray="2 .7"><path d="M2 2h9.500v9.500H2z" fill="#fbb040"/><path d="M12.500 2H22v9.500h-9.500z" fill="#801515"/><path d="M2 12.500h9.500V22H2z" fill="#7d7f80"/><path d="M12.500 12.500H22V22h-9.500z" fill="#3a54b0"/></g></svg><svg viewBox="0 0 24 24"><g stroke="#333" stroke-dasharray="2 .7"><path d="M2 2h9.500v9.500H2z" fill="#0d7f3f"/><path d="M12.500 2H22v9.500h-9.500z" fill="#f05b83"/><path d="M2 12.500h9.500V22H2z" fill="#25a5e0"/><path d="M12.500 12.500H22V22h-9.500z" fill="#ae5422"/></g></svg></div>
    </div><div class="cap">1 :: Visualize<u></u></div></div>
    <div class="group g133"><div class="cells">
      <div class="c"><svg viewBox="0 0 24 24"><g fill="none" stroke-width="2"><path d="M12 12L2 2M2 8V2h6" stroke="#ed1c24"/><path d="M12 12L22 2M16 2h6v6" stroke="#f6e500"/><path d="M12 12L2 22M2 16v6h6" stroke="#1379c8"/><path d="M12 12l10 10M22 16v6h-6" stroke="#00a64f"/></g></svg><svg viewBox="0 0 24 24"><g stroke="#222"><path d="M1 1h10.500v10.500H1z" fill="#ed1c24"/><path d="M12.500 1H23v10.500H12.500z" fill="#fff200"/><path d="M1 12.500h10.500V23H1z" fill="#0f75bd"/><path d="M12.500 12.500H23V23H12.500z" fill="#00a14b"/></g></svg></div><s></s>
      <div class="c"><svg viewBox="0 0 24 24"><g stroke="#333" stroke-dasharray="2 .7"><path d="M1 1h22v6H1z" fill="#ed1c24"/><path d="M1 9h22v6H1z" fill="#fff200"/><path d="M1 17h22v6H1z" fill="#0f75bd"/></g></svg><svg viewBox="0 0 24 24"><path d="M1 1h22L12 12z" fill="#ed1c24"/><path d="M1 1l11 11L1 23z" fill="#fff200"/><path d="M23 1v22L12 12z" fill="#00a14b"/><path d="M1 23l11-11 11 11z" fill="#0f75bd"/><path d="M1 1h22v22H1zL23 23M23 1L1 23" fill="none" stroke="#222"/></svg></div><s></s>
      <div class="c"><svg viewBox="0 0 24 24"><g fill="none" stroke-width="1.800"><path d="M12 12L2 2M2 8V2h6" stroke="#0d7f3f"/><path d="M12 12L22 2M16 2h6v6" stroke="#f48080"/><path d="M12 12L2 22M2 16v6h6" stroke="#35b0e8"/><path d="M12 12l10 10M22 16v6h-6" stroke="#ae5422"/></g></svg><svg viewBox="0 0 24 24"><g fill="none" stroke-width="1.800"><path d="M12 12L2 2M2 8V2h6" stroke="#fbb040"/><path d="M12 12L22 2M16 2h6v6" stroke="#801515"/><path d="M12 12L2 22M2 16v6h6" stroke="#8a8c8d"/><path d="M12 12l10 10M22 16v6h-6" stroke="#3a54b0"/></g></svg></div>
    </div><div class="cap">2 :: Organize<u></u></div></div>
    <div class="group g180"><div class="cells">
      <div class="c"><svg viewBox="0 0 24 24"><use href="#hex"/><path d="M12 6v11M7 12l5 5 5-5" stroke="#000" stroke-width="3" fill="none"/></svg><svg viewBox="0 0 24 24"><use href="#hex"/><path d="M12 18V7M7 12l5-5 5 5" stroke="#000" stroke-width="3" fill="none"/></svg></div><s></s>
      <div class="c"><svg viewBox="0 0 24 24"><ellipse cx="12" cy="12" rx="12.500" ry="5" fill="none" stroke="#333"/><circle cx="12" cy="12" r="9" fill="#f3ad45" stroke="#111" stroke-width="1.500"/><use href="#dn" stroke="#ed1c24"/></svg><svg viewBox="0 0 24 24"><ellipse cx="12" cy="12" rx="12.500" ry="5" fill="none" stroke="#333"/><circle cx="12" cy="12" r="9" fill="#f3ad45" stroke="#111" stroke-width="1.500"/><use href="#up" stroke="#ed1c24"/></svg></div><s></s>
      <div class="c"><svg viewBox="0 0 24 24"><use href="#eyes" fill="#4a4a4a"/><use href="#dn" stroke="#129ce4"/></svg><svg viewBox="0 0 24 24"><use href="#eyes" fill="#4a4a4a"/><use href="#up" stroke="#129ce4"/></svg></div><s></s>
      <div class="c"><svg viewBox="0 0 24 24"><use href="#leaf"/><use href="#dn" stroke="#f28c1e"/></svg><svg viewBox="0 0 24 24"><use href="#leaf"/><use href="#up" stroke="#f28c1e"/></svg></div>
    </div><div class="cap">3 :: Serialize<u></u></div></div>
    <div class="group g160"><div class="cells">
      <div class="c"><svg viewBox="0 0 24 24"><use href="#building"/></svg><svg viewBox="0 0 24 24"><use href="#bluewin" transform="translate(1.500 -2) scale(.87 1)"/></svg></div>
      <div class="c"><svg viewBox="0 0 24 24"><path d="M6.500 1h11v21h-11z" fill="#a4714b" stroke="#6b4930"/><circle cx="14" cy="12" r="1.200" fill="none" stroke="#332"/></svg><svg viewBox="0 0 24 24"><path d="M1 5h15l7 10H8z" fill="#fff" stroke="#555"/><path d="M1 5v18h15v-8" fill="none" stroke="#555" stroke-dasharray="2 1"/></svg></div>
      <div class="c"><svg viewBox="0 0 24 24"><use href="#cubewin"/></svg><svg viewBox="0 0 24 24"><path d="M0 0h24v24H0z" fill="#d07fc0" stroke="#333"/><g fill="#111"><circle cx="4" cy="4.500" r="2.200"/><circle cx="12" cy="4.500" r="2.200"/><circle cx="20" cy="4.500" r="2.200"/><circle cx="4" cy="12" r="2.200"/><circle cx="12" cy="12" r="2.200"/><circle cx="20" cy="12" r="2.200"/><circle cx="4" cy="19.500" r="2.200"/><circle cx="12" cy="19.500" r="2.200"/><circle cx="20" cy="19.500" r="2.200"/></g></svg></div><s></s><div class="c"></div>
    </div><div class="cap">4::Rhino</div></div>
  </div>
  <div class="ghbar">
    <svg class="b28" viewBox="0 0 28 28"><path d="M6 1h12l6 5v14H6z" fill="#eee" stroke="#666"/><path d="M2 12h10l3-3h11v18H2z" fill="#62b646" stroke="#28731c"/></svg>
    <svg class="b28 l2" viewBox="0 0 28 28"><path d="M1 1h26v26H3l-2-2z" fill="#1f69d8" stroke="#123a86"/><path d="M5 1h18v13H5z" fill="#eee"/><path d="M7 5h14M7 8h14" stroke="#aaa"/><path d="M6 17h14v10H6z" fill="#c9cbd0" stroke="#444"/><path d="M8 19h5v6H8z" fill="#1a4fae"/></svg>
    <div class="vr"></div>
    <div class="combo"><span>125%</span><svg width="10" height="6" viewBox="0 0 10 6"><path d="M.5.500L5 5 9.500.5" fill="none" stroke="#444"/></svg></div>
    <svg class="b28 l3" viewBox="0 0 28 28"><path d="M3 10V3h8M17 3h8v7M25 18v7h-8M11 25H3v-7" fill="none" stroke="#1c1c1c" stroke-width="5"/><path d="M11 11l6 6M17 11l-6 6" stroke="#222" stroke-width="2.500"/></svg>
    <div class="tri"></div>
    <svg class="b28" viewBox="0 0 28 28"><path d="M1 14q6-9 13-9t13 9q-6 9-13 9T1 14z" fill="#eee" stroke="#263c4d" stroke-width="1.800"/><circle cx="14" cy="13.500" r="7" fill="#4fb0dc" stroke="#24607f"/><circle cx="14" cy="13.500" r="3" fill="#081018"/><circle cx="12" cy="11" r="1.500" fill="#fff"/></svg>
    <div class="tri"></div>
    <svg class="b28" viewBox="0 0 28 28"><path d="M11 18L25 3v14L14 24z" fill="#e02a2a" stroke="#b55"/><path d="M11 18l3-3 5 5-5 4z" fill="#e9b74c"/><path d="M2 8q5-1 3 6t0 9q5 5 9 0l-3-5" fill="none" stroke="#5c1510" stroke-width="2.200"/></svg>
    <div class="grow"></div>
    <svg class="b28" viewBox="0 0 28 28"><path d="M4 6l5-5h11l5 6-5 10H9z" fill="#ddd" stroke="#777"/><ellipse cx="15" cy="7" rx="6" ry="4" fill="#f5f5f5" stroke="#aaa"/><path d="M3 20q11-9 22 0-3 8-11 8T3 20z" fill="#333"/></svg>
    <svg class="b28 l5" viewBox="0 0 28 28"><path d="M1 18L15 1q9 0 12 9L14 27Q3 27 1 18z" fill="#eee" stroke="#555" stroke-width="1.500"/><ellipse cx="9" cy="19" rx="5" ry="7" transform="rotate(-40 9 19)" fill="none" stroke="#555"/><ellipse cx="20" cy="8" rx="4" ry="6" transform="rotate(-40 20 8)" fill="none" stroke="#555"/></svg>
    <div class="sel"><svg class="b28" viewBox="0 0 28 28"><path d="M1 15L12 2q10-4 15 8L17 25Q3 29 1 15z" fill="#b80e0e" stroke="#600"/><ellipse cx="20" cy="8" rx="4" ry="6" transform="rotate(-45 20 8)" fill="#7b0303" stroke="#e05050"/><path d="M4 14l9-9" stroke="#f08080" stroke-width="2"/></svg></div>
    <div class="vr r"></div>
    <svg class="b28 l4" viewBox="0 0 28 28"><path d="M1 15L12 2h16v26Q3 29 1 15z" fill="#ddd" stroke="#555"/><path d="M3 5l12 9L26 2H12z" fill="#7ac143" stroke="#333"/></svg>
  </div>
  <div class="canvas">
    <svg class="wires" width="970" height="557" viewBox="950 148 970 557"><g stroke="#57554e" stroke-width="2.300" fill="none"><path d="M1110 374.500h140M1110 379h140M1452 455.300h88M1452 459.500h88"/><path d="M1232 402.500q10 0 18-1" stroke-width="3.500"/></g>
      <g fill="#fff" stroke="#000" stroke-width="2"><circle cx="1037" cy="376.500" r="5"/><circle cx="1106.500" cy="376.500" r="5"/><circle cx="1165.500" cy="402.500" r="5"/><circle cx="1229" cy="402.500" r="5"/><circle cx="1253.500" cy="376.500" r="5"/><circle cx="1253.500" cy="401.500" r="5"/><circle cx="1253.500" cy="426.500" r="5"/><circle cx="1253.500" cy="451.500" r="5"/><circle cx="1253.500" cy="476.500" r="5"/><circle cx="1449" cy="395" r="5"/><circle cx="1449" cy="457.500" r="5"/><circle cx="1543" cy="457.500" r="5"/></g>
      <g id="ports" fill="#fff" stroke="#000" stroke-width="2"></g></svg>
    <div class="node n1"><svg width="25" height="26" viewBox="0 0 24 24"><use href="#cubewin"/></svg></div>
    <div class="node n2">0.45</div>
    <div class="node n3"><div class="ins"><span>_hb_objs</span><span>_depth</span><span>indoor_</span><span>ep_constr_</span><span>rad_mod_</span></div>
      <svg class="nicon" width="24" height="26" viewBox="0 0 24 26"><path d="M1 1h18l4 4v20H5l-4-4z" fill="#fff" stroke="#444" stroke-width="1.500"/><path d="M5 5h13v16H5z" fill="#25a5e0" stroke="#333" stroke-width="1.500"/><path d="M1 1l4 4M19 1l-1 4h5M5 25v-4M18 21l5 4" stroke="#444" fill="none"/></svg>
      <div class="outs"><span>report</span><span>hb_objs</span></div>
      <div class="down"><svg width="12" height="13" viewBox="0 0 12 13"><path d="M6 0v11M1 6l5 5 5-5" fill="none" stroke="#555" stroke-width="2"/></svg></div></div>
    <div class="ver v3">1.2.0</div>
    <div class="node n4"><div class="in4">_hb_objs</div>
      <svg class="ic4" width="26" height="26" viewBox="0 0 26 26"><g stroke="#444" stroke-dasharray="2 .7"><path d="M1 1h11.500v11.500H1z" fill="#fbb040"/><path d="M13.500 1H25v11.500H13.500z" fill="#801515"/><path d="M1 13.500h11.500V25H1z" fill="#7d8080"/><path d="M13.500 13.500H25V25H13.500z" fill="#3a58b8"/></g></svg>
      <div class="outlist"><span>walls</span><span>interior_walls</span><span>roofs</span><span>ceilings</span><span>exterior_floors</span><span>interior_floors</span><span>air_walls</span><span>apertures</span><span>interior_apertures</span><span>doors</span><span>interior_doors</span><span>outdoor_shades</span><span>indoor_shades</span><span>wire_frame</span></div></div>
    <div class="ver v4">1.2.0</div>
  </div>
</section>
</main>
<script src="grid.js"></script>
</body>
</html>
```
FILE: styles.css
```css
* { box-sizing: border-box; }
body { margin: 0; font-family: "Open Sans", "Noto Sans", sans-serif; color: #000; overflow: hidden; }
.defs { position: absolute; }
.screen { display: flex; width: 1920px; height: 705px; overflow: hidden; }
svg { display: block; flex: none; }
.rhino { width: 948px; height: 705px; background: #e9eaef; display: flex; flex-direction: column; overflow: hidden; flex: none; border-right: 1px solid #55585c; }
.tabs { height: 31px; position: relative; display: flex; padding-left: 23px; flex: none; border-bottom: 1px solid transparent; }
.tabshape { position: absolute; left: 0; top: 0; overflow: visible; }
.tabs span { position: relative; font-size: 14.5px; line-height: 20px; padding-top: 9.5px; white-space: nowrap; flex: none; letter-spacing: -0.05px; }
.toolbar { height: 39px; display: flex; padding: 1px 0 0 9.5px; flex: none; }
i { width: 28px; height: 28px; display: flex; align-items: center; justify-content: center; position: relative; flex: none; }
i > svg { width: 23px; height: 23px; overflow: visible; }
.toolbar i.m::after, .side i.m::after { content: ""; position: absolute; right: 0; bottom: 1px; border-left: 6px solid transparent; border-bottom: 6px solid #666; }
.wheel { width: 19px; height: 19px; border-radius: 50%; background: radial-gradient(#fff 44%, #333 47%, transparent 50%), conic-gradient(#f22, #f90, #fe0, #3c3, #1cc, #23e, #c2d, #f22); border: 1px solid #333; }
.q { font: bold 17px "Liberation Serif", serif; fill: #fff; }
.work { display: flex; flex: 1; }
.side { width: 64px; display: grid; grid-template-columns: 28px 28px; grid-auto-rows: 28.08px; align-content: start; padding: 9px 0 0 0; flex: none; background: linear-gradient(#c9d3e8, #c9d3e8) 3px 4px / 55px 1px no-repeat, linear-gradient(#c9d3e8, #c9d3e8) 3px 6px / 55px 1px no-repeat; }
.viewport { position: relative; width: 884px; height: 635px; border-left: 1px solid #b8c3dd; border-top: 1px solid #b8c3dd; background: #9ca3aa; overflow: hidden; }
.viewport::after { content: ""; position: absolute; right: 0; top: 0; width: 14px; height: 100%; background: linear-gradient(90deg, transparent, #0003); }
.viewname { position: absolute; left: 0; top: 0; width: 82px; height: 22px; background: #8ca5c3; border-radius: 0 0 4px 0; display: flex; align-items: center; padding-left: 9px; font-size: 14.3px; }
.viewname b { border-right: 1px solid #111; line-height: 20px; width: 60px; letter-spacing: -0.3px; }
.viewname em { border: 5px solid transparent; border-top-color: #000; border-bottom: 0; margin-left: 1px; }
.gh { width: 972px; height: 705px; display: flex; flex-direction: column; flex: none; border-left: 2px solid #77797b; background: #f0f0f0; }
.ribbon { height: 109px; display: flex; gap: 4.700px; padding: 4px 0 0 2px; background: linear-gradient(#d8d8d8 0 2px, #f0f0f0 3px); overflow: hidden; }
.group { height: 91px; border: 1px solid #777; border-radius: 5px; background: linear-gradient(#e9e9e9, #ddd 40%, #eee); overflow: hidden; flex: none; display: flex; flex-direction: column; }
.g250 { width: 250px; } .g262 { width: 262.500px; } .g133 { width: 133px; } .g180 { width: 180.500px; } .g160 { width: 190px; }
.cells { display: flex; padding: 0 0 0 1px; height: 72px; flex: none; }
.c { width: 35px; display: flex; flex-direction: column; align-items: center; gap: 7px; padding-top: 5px; flex: none; }
.c svg { width: 28px; height: 28px; overflow: visible; }
.cells s { width: 12px; flex: none; background: linear-gradient(90deg, transparent 5px, #c2c2c2 5px 6px, transparent 6px); }
.cap { flex: 1; background: #1d1d1d; color: #fff; font: 12px/17px "Liberation Sans", Arial, sans-serif; text-align: center; position: relative; padding-right: 13px; }
.g160 .cap { padding-right: 12px; }
.cap u { position: absolute; right: 3px; top: 4px; width: 8px; height: 9px; background: #8d8d8d; clip-path: polygon(37% 0, 63% 0, 63% 40%, 100% 40%, 50% 100%, 0 40%, 37% 40%); }
.at { font: bold 9px "Liberation Mono", monospace; fill: #222; }
.at.l { font-size: 10px; }
.ghbar { height: 39px; border-top: 1px solid #777; border-bottom: 1px solid #aaa69f; background: linear-gradient(#fff, #f4f4f4); display: flex; align-items: center; padding-left: 3px; overflow: hidden; }
.b28 { width: 27px; height: 27px; }
.l2 { margin-left: 9px; }
.l3 { margin-left: 6px; }
.vr { width: 1px; height: 27px; background: #bbb; margin: 0 4px 0 9px; }
.combo { width: 180px; height: 28px; border: 1px solid #777; background: #fff; display: flex; justify-content: space-between; align-items: center; padding: 0 5px 0 3px; font-size: 14.5px; }
.combo span { letter-spacing: -0.6px; position: relative; top: -1px; }
.tri { border: 3px solid transparent; border-top-color: #000; border-bottom: 0; margin: 0 9px 0 9px; }
.grow { flex: 1; }
.l5 { margin-left: 7px; }
.sel { width: 34px; height: 34px; border: 1px solid #0078d7; display: flex; align-items: center; justify-content: center; margin-left: 4px; flex: none; }
.vr.r { margin: 0 10px 0 9px; }
.l4 { margin-right: -14px; }
.canvas { position: relative; flex: 1; overflow: hidden; background-color: #d4cfc8; background-image: linear-gradient(90deg, #bab6af 1px, transparent 1px), linear-gradient(#bab6af 1px, transparent 1px); background-size: 187.500px 187.500px, 62.600px 62.600px; background-position: 118px 0, 0 61px; }
.wires { position: absolute; left: 0; top: 0; }
.node { position: absolute; border: 1px solid #444; border-radius: 4px; background: linear-gradient(#f8f8f8 0, #e6e6e6 10px, #c9c9c9 100%); font-size: 13.1px; letter-spacing: -0.08px; color: #151515; }
.n1 { left: 87px; top: 210px; width: 70px; height: 36px; display: flex; align-items: center; justify-content: center; padding-right: 4px; }
.n2 { left: 215px; top: 241.500px; width: 64px; height: 26px; background: #fff; font: 12px/21px "Liberation Mono", monospace; color: #1d4a1d; padding-left: 10px; letter-spacing: 0.9px; }
.n3 { left: 303px; top: 213px; width: 196px; height: 131px; }
.ins { position: absolute; right: 103px; top: 1.500px; display: flex; flex-direction: column; align-items: flex-end; }
.ins span, .outlist span { height: 25px; line-height: 24px; }
.nicon { position: absolute; left: 100px; top: 52px; }
.outs { position: absolute; left: 134px; top: 20.500px; display: grid; grid-template-rows: 62.500px 25px; line-height: 24px; }
.down { position: absolute; left: 3px; top: 5px; width: 17px; height: 17px; border: 1px solid #555; border-radius: 3px; display: flex; align-items: center; justify-content: center; }
.ver { position: absolute; height: 19px; background: #303030; border-radius: 0 0 4px 4px; color: #eee; text-align: center; font-size: 13px; line-height: 17px; }
.v3 { left: 310px; top: 344px; width: 182px; }
.n4 { left: 593px; top: 132px; width: 224px; height: 356px; }
.in4 { position: absolute; left: 8px; top: 164px; line-height: 24px; }
.ic4 { position: absolute; left: 70px; top: 164px; }
.outlist { position: absolute; left: 102.500px; top: 1.500px; display: flex; flex-direction: column; }
.v4 { left: 600px; top: 488px; width: 209px; }
```
FILE: grid.js
```js
// Isometric construction grid: two families of parallel lines, every fifth one heavy.
const W = 117.63, H = 67.97, X0 = 106.67, Y0 = 542.67, slope = H / W;
let minor = "", major = "";
for (let k = -100; k <= 100; k++) {
  for (const dir of [1, -1]) {
    const y = x => (Y0 + k * H / 5 + dir * slope * (x - X0)).toFixed(2);
    const seg = `M60 ${y(60)}L950 ${y(950)}`;
    if (k % 5 === 0) major += seg; else minor += seg;
  }
}
document.getElementById("minor").setAttribute("d", minor);
document.getElementById("major").setAttribute("d", major);

// Output grips down the right-hand side of the sorting component.
let grips = "";
for (let r = 0; r < 14; r++) grips += `<circle cx="1767" cy="${295 + r * 25}" r="5"/>`;
document.getElementById("ports").innerHTML = grips;
```
